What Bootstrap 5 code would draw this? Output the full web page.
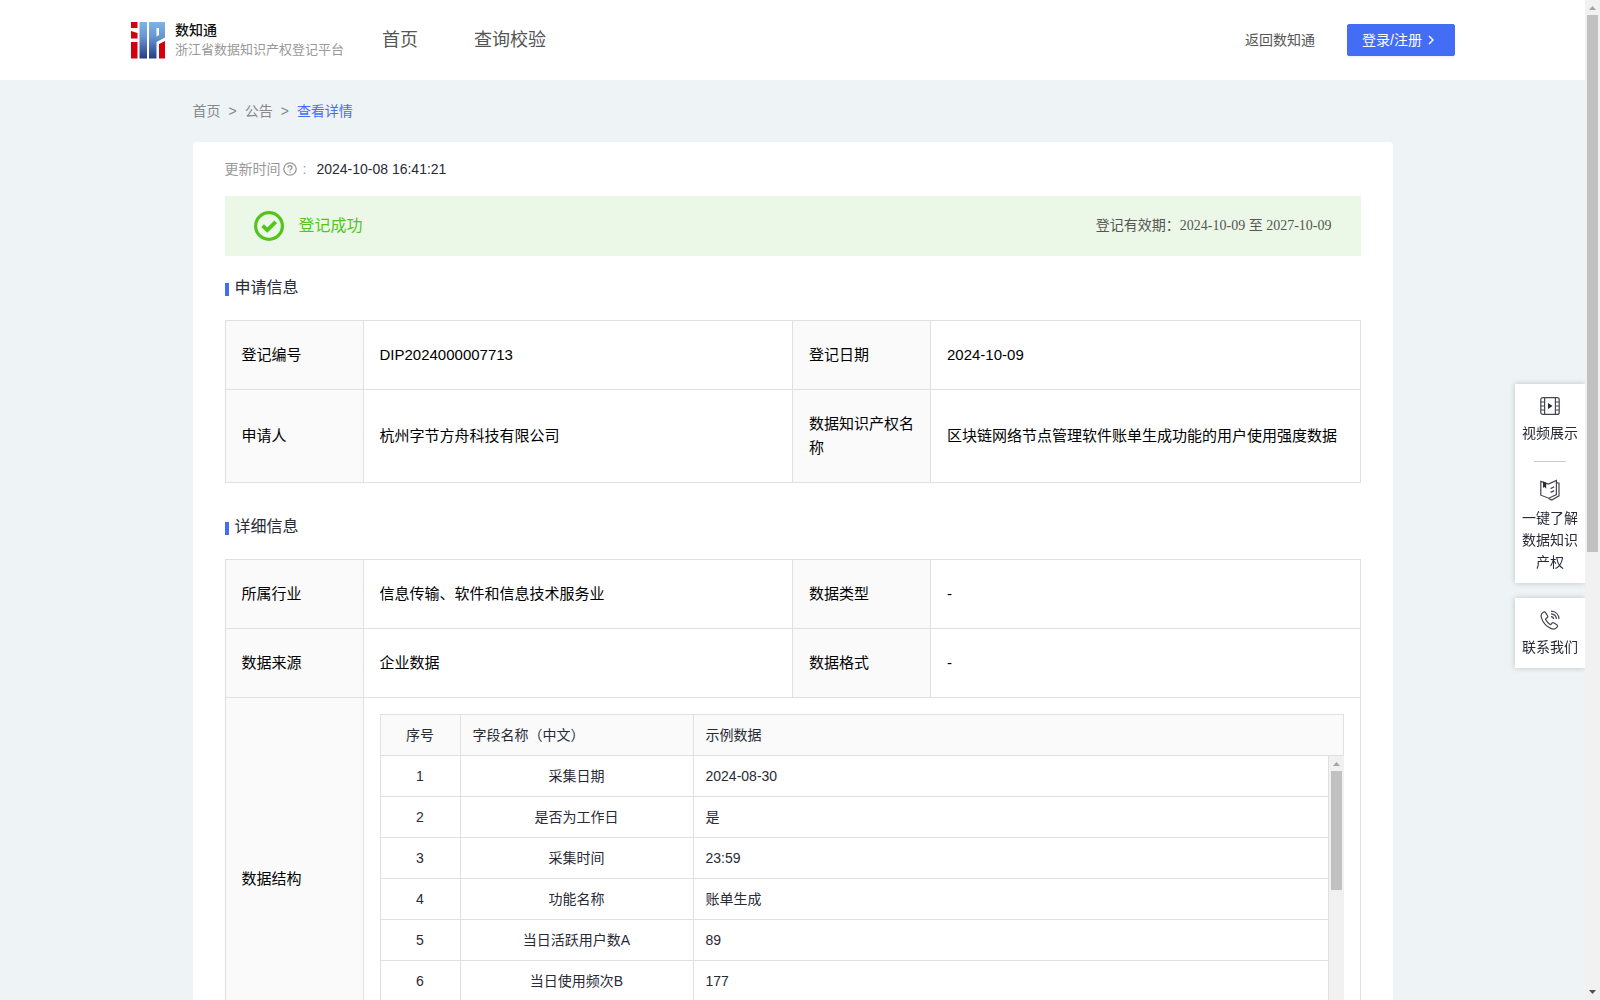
<!DOCTYPE html>
<html lang="zh-CN">
<head>
<meta charset="utf-8">
<meta name="viewport" content="width=device-width, initial-scale=1">
<title>数知通</title>
<link href="https://cdn.jsdelivr.net/npm/bootstrap@5.3.0/dist/css/bootstrap.min.css" rel="stylesheet">
<style>
:root{--brand:#446df6;--line:#e0e0e0;--soft:#fafafa;--ink:#282a36}
body{font-family:"Liberation Sans","Noto Sans CJK SC",sans-serif;font-size:14px;line-height:20px;color:var(--ink);background:#eef3f6}
a{text-decoration:none}
.view-pane{min-width:0;overflow-y:auto;scrollbar-width:none}
.view-pane::-webkit-scrollbar{display:none}
/* scroll tracks */
.track{width:15px;flex:none;background:#f1f1f1}
.track svg{display:block;width:15px;height:15px;flex:none}
.thumb{width:11px;background:#c1c1c1}
.track-page .thumb{height:537px}
.track-list .thumb{height:119px}
/* header */
.site-head{min-height:80px;padding:0 130px 0 131px}
.brand-title{font-size:14px;line-height:20px;font-weight:500;color:#111}
.brand-sub{font-size:13px;line-height:20px;color:#999}
.brand-box{width:208px;gap:9px;color:inherit}
.main-nav{gap:56px;margin-left:43px}
.main-nav a{font-size:18px;line-height:24px;color:#555}
.back-link{color:#555}
.btn-login{--bs-btn-color:#fff;--bs-btn-bg:var(--brand);--bs-btn-border-color:var(--brand);--bs-btn-hover-color:#fff;--bs-btn-hover-bg:#3a60e0;--bs-btn-border-radius:2px;--bs-btn-font-size:14px;width:108px;height:32px;padding:0 0 1px 14px;line-height:20px;box-shadow:0 2px 0 rgba(0,0,0,.045)}
/* page */
.page-wrap{max-width:1200px}
.crumbs{padding:21px 0;gap:8px;color:#888}
.crumbs a{color:#888}
.crumbs .here{color:var(--brand)}
.panel{background:#fff;border-radius:4px;padding:17px 32px 32px}
.muted{color:#999}
.stamp{gap:2px}
.banner{min-height:60px;margin-top:17px;padding:0 29px;background:#ecf8e7}
.banner-state{font-size:16px;line-height:24px;color:#52c41a;gap:15px}
.banner-term{color:#555;font-family:"Liberation Serif","Noto Sans CJK SC",serif}
.sec-title{font-size:16px;line-height:24px;margin:20px 0;font-weight:400;gap:6px}
.sec-title::before{content:"";width:4px;height:13px;margin-top:2px;background:var(--brand)}
.sec-next{margin-top:32px}
.info{width:100%;table-layout:fixed;border-collapse:collapse;font-size:15px;line-height:24px;color:#000}
.info>tbody>tr>th,.info>tbody>tr>td{border:1px solid var(--line);padding:22px 16px;font-weight:400;vertical-align:middle}
.info>tbody>tr>th{background:var(--soft)}
.info .c-key{width:138px}
.info>tbody>tr>td.holder{padding:16px}
.fields{width:100%;table-layout:fixed;border-collapse:collapse;font-size:14px;line-height:20px;color:var(--ink)}
.fields th,.fields td{border:1px solid var(--line);height:41px;padding:0 12px;font-weight:400}
.fields th{background:var(--soft)}
.fields .c-no{width:80px}
.fields .c-name{width:233px}
.list-body{height:287px;overflow:hidden}
.list-body .fields tr:first-child td{border-top:0;height:40px}
/* side tools */
.side-tools{position:fixed;right:15px;top:384px;width:70px;gap:15px}
.tool-box{background:#fff;box-shadow:0 0 6px rgba(0,0,0,.2);clip-path:inset(-8px 0 -8px -8px)}
.tool-box a{color:var(--ink);line-height:22px;padding:12px 6px 10px}
.tool-box a.tool-top{padding-bottom:17px}
.tool-box a.tool-mid{padding-top:17px}
.tool-box hr{width:32px;margin:0 auto;border-color:#ccc;opacity:1}
.tool-box svg{display:block;margin:0 auto 6px}
</style>
<script src="https://cdn.jsdelivr.net/npm/bootstrap@5.3.0/dist/js/bootstrap.bundle.min.js"></script>
</head>
<body class="d-flex vh-100 overflow-hidden">
<div class="view-pane flex-grow-1">
  <header class="site-head bg-white d-flex align-items-center">
    <a href="#" class="brand-box d-flex align-items-center">
      <svg width="35" height="37" viewBox="0 0 35 37" class="flex-shrink-0" aria-hidden="true">
        <defs><linearGradient id="lg" x1="0" y1="0" x2="0" y2="37" gradientUnits="userSpaceOnUse"><stop offset="0" stop-color="#80b3e8"/><stop offset=".4" stop-color="#6796d2"/><stop offset="1" stop-color="#243a80"/></linearGradient></defs>
        <path fill="#d3000e" d="M0 0h6.500v6H0zM0 9l6.500 2v5.500H0zM0 20h6.500v16.500H0zM28 22l6-3v17.500h-6z"/>
        <path fill="url(#lg)" d="M8.500 0h7.500v36.500H8.500zM18 0h16v15.500l-8.500 4.500v16.500H18z"/>
        <path fill="#fff" d="M25.500 6h2.500v7l-2.500 1.500z"/>
      </svg>
      <span class="d-flex flex-column text-nowrap"><span class="brand-title">数知通</span><span class="brand-sub">浙江省数据知识产权登记平台</span></span>
    </a>
    <nav class="main-nav d-flex"><a href="#">首页</a><a href="#">查询校验</a></nav>
    <div class="ms-auto d-flex align-items-center">
      <a href="#" class="back-link me-3 pe-3">返回数知通</a>
      <button type="button" class="btn btn-login d-flex align-items-center gap-1">登录/注册
        <svg width="10" height="10" viewBox="0 0 10 10" fill="none" stroke="#fff" stroke-width="1.4" aria-hidden="true"><path d="M3 1l4 4-4 4"/></svg>
      </button>
    </div>
  </header>

  <main class="page-wrap mx-auto">
    <nav class="crumbs d-flex" aria-label="breadcrumb"><a href="#">首页</a><span>&gt;</span><a href="#">公告</a><span>&gt;</span><a href="#" class="here">查看详情</a></nav>

    <section class="panel">
      <div class="stamp d-flex align-items-center"><span class="muted">更新时间</span>
        <svg width="14" height="14" viewBox="0 0 14 14" fill="none" stroke="#999" stroke-width="1.3" aria-hidden="true"><circle cx="7" cy="7" r="6.200"/><path d="M5 5.700c0-2.600 4-2.600 4 0C9 7 7 7 7 8.500M7 9.600v1.200"/></svg>
        <span class="muted ms-1">:</span><span class="ms-2">2024-10-08 16:41:21</span>
      </div>

      <div class="banner d-flex align-items-center justify-content-between">
        <div class="banner-state d-flex align-items-center">
          <svg width="30" height="30" viewBox="0 0 30 30" fill="none" stroke="#52c41a" aria-hidden="true"><circle cx="15" cy="15" r="13.400" stroke-width="3.200"/><path d="M8.600 14.600l4.700 4.600 8.400-8.400" stroke-width="3.800"/></svg>
          登记成功
        </div>
        <div class="banner-term">登记有效期：2024-10-09 至 2027-10-09</div>
      </div>

      <h2 class="sec-title d-flex align-items-center">申请信息</h2>
      <table class="info">
        <colgroup><col class="c-key"><col><col class="c-key"><col></colgroup>
        <tbody>
          <tr><th scope="row">登记编号</th><td>DIP2024000007713</td><th scope="row">登记日期</th><td>2024-10-09</td></tr>
          <tr><th scope="row">申请人</th><td>杭州字节方舟科技有限公司</td><th scope="row">数据知识产权名称</th><td>区块链网络节点管理软件账单生成功能的用户使用强度数据</td></tr>
        </tbody>
      </table>

      <h2 class="sec-title sec-next d-flex align-items-center">详细信息</h2>
      <table class="info">
        <colgroup><col class="c-key"><col><col class="c-key"><col></colgroup>
        <tbody>
          <tr><th scope="row">所属行业</th><td>信息传输、软件和信息技术服务业</td><th scope="row">数据类型</th><td>-</td></tr>
          <tr><th scope="row">数据来源</th><td>企业数据</td><th scope="row">数据格式</th><td>-</td></tr>
          <tr><th scope="row">数据结构</th><td colspan="3" class="holder">
            <table class="fields">
              <colgroup><col class="c-no"><col class="c-name"><col></colgroup>
              <thead><tr><th scope="col" class="text-center">序号</th><th scope="col">字段名称（中文）</th><th scope="col">示例数据</th></tr></thead>
            </table>
            <div class="list-body d-flex align-items-start">
              <table class="fields">
                <colgroup><col class="c-no"><col class="c-name"><col></colgroup>
                <tbody>
                  <tr><td class="text-center">1</td><td class="text-center">采集日期</td><td>2024-08-30</td></tr>
                  <tr><td class="text-center">2</td><td class="text-center">是否为工作日</td><td>是</td></tr>
                  <tr><td class="text-center">3</td><td class="text-center">采集时间</td><td>23:59</td></tr>
                  <tr><td class="text-center">4</td><td class="text-center">功能名称</td><td>账单生成</td></tr>
                  <tr><td class="text-center">5</td><td class="text-center">当日活跃用户数A</td><td>89</td></tr>
                  <tr><td class="text-center">6</td><td class="text-center">当日使用频次B</td><td>177</td></tr>
                </tbody>
              </table>
              <div class="track track-list h-100 d-flex flex-column align-items-center" aria-hidden="true">
                <svg viewBox="0 0 15 15"><path fill="#a3a3a3" d="M4 10l3.500-4L11 10z"/></svg><div class="thumb"></div>
              </div>
            </div>
          </td></tr>
        </tbody>
      </table>
    </section>
  </main>
</div>

<aside class="side-tools d-flex flex-column text-center">
  <div class="tool-box">
    <a href="#" class="tool-top d-block">
      <svg width="20" height="20" viewBox="0 0 20 20" fill="none" stroke="#444650" stroke-width="1.2" aria-hidden="true"><rect x=".8" y="1.600" width="18.400" height="16.800" rx="2"/><path d="M4.600 1.600v16.800M15.400 1.600v16.800M.8 6h3.800M.8 10h3.800M.8 14h3.800M15.400 6h3.800M15.400 10h3.800M15.400 14h3.800"/><path d="M8 7l4.600 3L8 13z" fill="#282a36" stroke="none"/></svg>
      视频展示</a>
    <hr>
    <a href="#" class="tool-mid d-block">
      <svg width="20" height="22" viewBox="0 0 20 22" fill="none" stroke="#444650" stroke-width="1.2" aria-hidden="true"><path d="M.8 2.400L8.400 5l8-3.600v14.200l-7.600 3.600-8-3z"/><path d="M16.600 3.600l2.400.6v12.600L11.800 21l-3-1.400M10.600 9.600l3.600-1.800M10.600 13.400l3.600-1.800"/><path d="M3 2.600l3.200 1.200v6L4.600 8 3 8.800z" fill="#282a36" stroke="none"/></svg>
      一键了解数据知识产权</a>
  </div>
  <div class="tool-box">
    <a href="#" class="d-block">
      <svg width="20" height="20" viewBox="0 0 20 20" fill="none" stroke="#444650" stroke-width="1.200" aria-hidden="true"><path d="M3.200 2.200C1.200 3.400.6 5.600 1.600 8.400c1.600 4.600 4.800 8 9.200 10 2.800 1.200 5 .6 6.400-1.400.6-.8.4-1.600-.4-2.200l-2.800-1.900c-.8-.5-1.500-.4-2.100.3l-.7.900c-.4.500-.9.600-1.400.2-1.700-1.200-3-2.600-4-4.500-.3-.5-.1-1 .3-1.300l1-.7c.7-.5.8-1.200.4-2L5.600 2.600c-.6-.9-1.500-1-2.400-.4z"/><path d="M11 1.200c4.600.2 7.800 3.200 8 7.800M11 3.800c3.200.2 5.200 2.200 5.400 5.200M11 6.600c1.600.1 2.500 1 2.600 2.400"/></svg>
      联系我们</a>
  </div>
</aside>

<div class="track track-page d-flex flex-column align-items-center" aria-hidden="true">
  <svg viewBox="0 0 15 15"><path fill="#a3a3a3" d="M4 10l3.500-4L11 10z"/></svg>
  <div class="thumb"></div>
  <svg class="mt-auto" viewBox="0 0 15 15"><path fill="#505050" d="M4 5l3.500 4L11 5z"/></svg>
</div>
</body>
</html>
